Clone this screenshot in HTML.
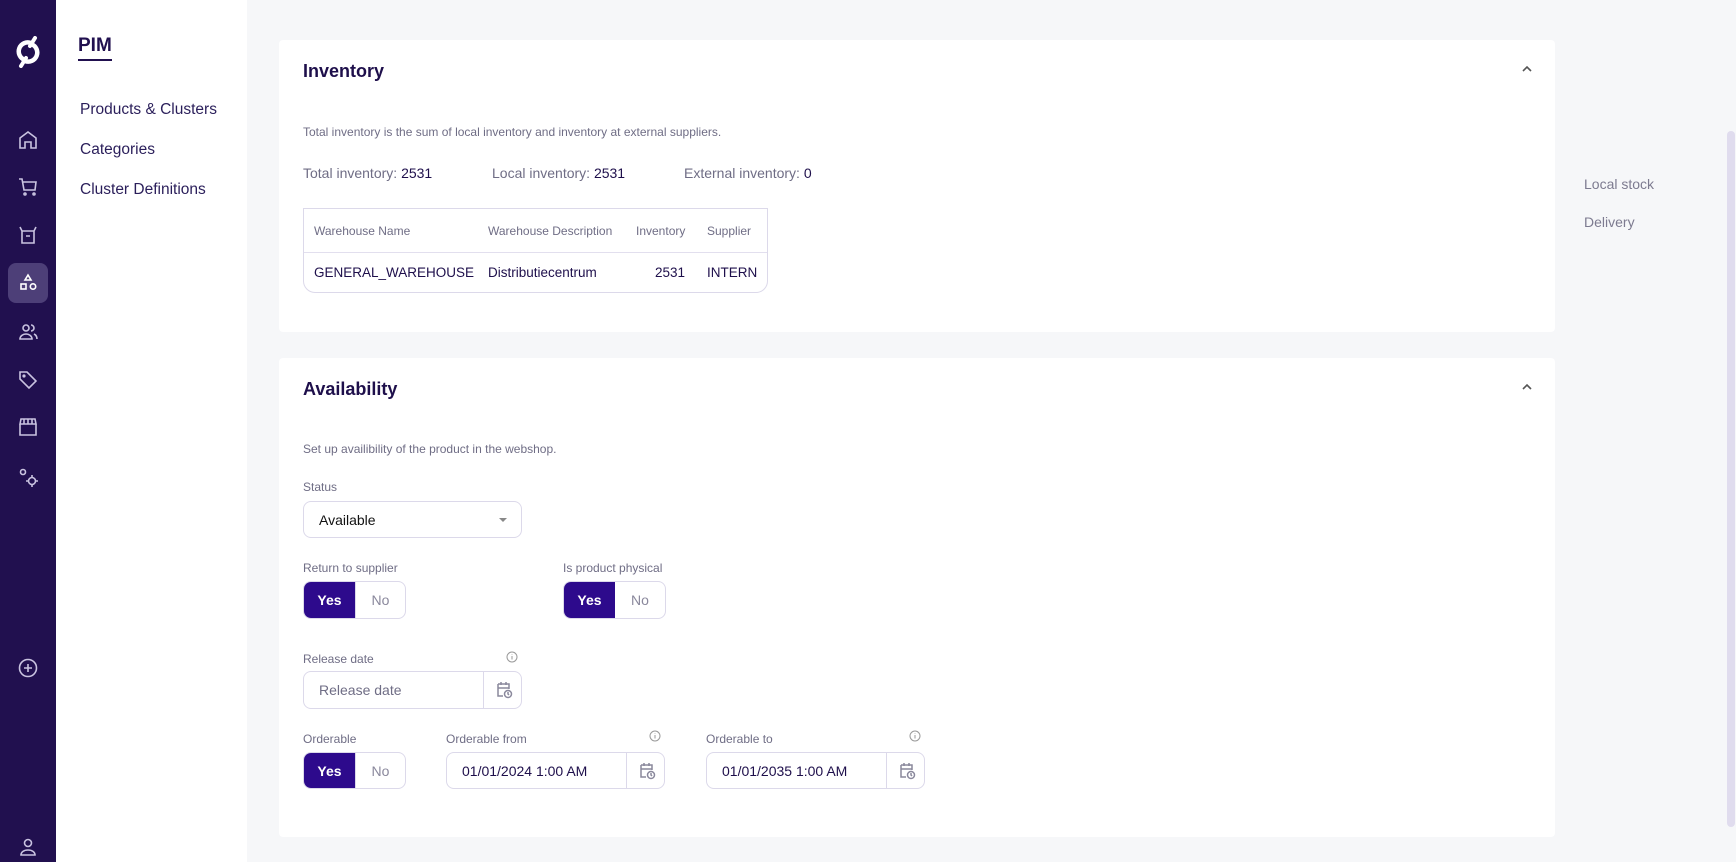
<!DOCTYPE html>
<html><head><meta charset="utf-8"><style>
*{box-sizing:border-box;margin:0;padding:0}
body{width:1736px;height:862px;overflow:hidden;background:#f6f7f9;font-family:"Liberation Sans",sans-serif;color:#1e0f4b;position:relative}
.abs{position:absolute}
.side{left:0;top:0;width:56px;height:862px;background:#21104f}
.ic{position:absolute;left:16px;width:24px;height:24px}
.nav{left:56px;top:0;width:191px;height:862px;background:#fff}
.card{position:absolute;left:279px;width:1276px;background:#fff;border-radius:4px}
.t{position:absolute;white-space:nowrap}
.lbl{font-size:12px;color:#6f6d85}
.box{position:absolute;border:1px solid #dcd9ea;border-radius:8px;background:#fff}
.tog{position:absolute;height:38px;width:103px;border:1px solid #dcd9ea;border-radius:8px;overflow:hidden;display:flex;font-size:14px}
.tog .y{width:51px;background:#2d0a8c;color:#fff;font-weight:bold;display:flex;align-items:center;justify-content:center}
.tog .n{flex:1;color:#8a889c;display:flex;align-items:center;justify-content:center}
</style></head><body>
<div class="abs side">
<svg class="abs" style="left:13px;top:36px" width="30" height="32" viewBox="0 0 30 32"><path d="M18.5 8.2 A9 9 0 0 1 12 25" fill="none" stroke="#fff" stroke-width="4.5"/><path d="M11.5 23.8 A9 9 0 0 1 18 7" fill="none" stroke="#fff" stroke-width="4.5"/><path d="M22 2 L17 10 M8 30 L13 22" stroke="#fff" stroke-width="4" stroke-linecap="round"/></svg>
<svg class="ic" style="top:128px" viewBox="0 0 24 24" fill="none" stroke="#c9c3e0" stroke-width="1.6"><path d="M4 10l8-6 8 6v10h-5v-6H9v6H4z"/></svg>
<svg class="ic" style="top:175px" viewBox="0 0 24 24" fill="none" stroke="#c9c3e0" stroke-width="1.6"><path d="M3 4h3l2 11h11l1-8H7"/><circle cx="9" cy="19" r="1"/><circle cx="18" cy="19" r="1"/></svg>
<svg class="ic" style="top:223px" viewBox="0 0 24 24" fill="none" stroke="#c9c3e0" stroke-width="1.6"><path d="M4 4l2 4h12l2-4M6 8v12h12V8M10 13h4"/></svg>
<div class="abs" style="left:8px;top:263px;width:40px;height:40px;border-radius:8px;background:#4d3f78"></div>
<svg class="ic" style="top:271px" viewBox="0 0 24 24" fill="none" stroke="#fff" stroke-width="1.6"><path d="M12 4l3 5H9z"/><rect x="5" y="13" width="5" height="5"/><circle cx="17" cy="15.5" r="2.7"/></svg>
<svg class="ic" style="top:320px" viewBox="0 0 24 24" fill="none" stroke="#c9c3e0" stroke-width="1.6"><circle cx="10" cy="8" r="3"/><path d="M4 19c0-3 3-5 6-5s6 2 6 5zM15 5a3 3 0 0 1 0 6M18 14c2 1 3 3 3 5"/></svg>
<svg class="ic" style="top:368px" viewBox="0 0 24 24" fill="none" stroke="#c9c3e0" stroke-width="1.6"><path d="M4 4h7l9 9-7 7-9-9z"/><circle cx="8" cy="8" r="0.8"/></svg>
<svg class="ic" style="top:415px" viewBox="0 0 24 24" fill="none" stroke="#c9c3e0" stroke-width="1.6"><path d="M4 9l1-5h14l1 5zM4 9v11h16V9M8 4v5M12 4v5M16 4v5"/></svg>
<svg class="ic" style="top:465px" viewBox="0 0 24 24" fill="none" stroke="#c9c3e0" stroke-width="1.6"><circle cx="7" cy="7" r="2.5"/><circle cx="16" cy="16" r="3.5"/><path d="M16 10v2M16 20v2M10 16h2M20 16h2"/></svg>
<svg class="ic" style="top:656px" viewBox="0 0 24 24" fill="none" stroke="#c9c3e0" stroke-width="1.6"><circle cx="12" cy="12" r="8.5"/><path d="M12 8v8M8 12h8"/></svg>
<svg class="ic" style="top:835px" viewBox="0 0 24 24" fill="none" stroke="#c9c3e0" stroke-width="1.6"><circle cx="12" cy="8" r="3.5"/><path d="M5 20c0-3 3-5 7-5s7 2 7 5z"/></svg>
</div>
<div class="abs nav">
<div class="t" style="left:22px;top:35px;font-size:19px;font-weight:bold;color:#21104f">PIM</div>
<div class="abs" style="left:22px;top:59px;width:34px;height:2px;background:#21104f"></div>
<div class="t" style="left:24px;top:101px;font-size:15.5px;color:#2a1e5a">Products &amp; Clusters</div>
<div class="t" style="left:24px;top:141px;font-size:15.5px;color:#2a1e5a">Categories</div>
<div class="t" style="left:24px;top:181px;font-size:15.5px;color:#2a1e5a">Cluster Definitions</div>
</div>

<div class="card" style="top:40px;height:292px">
<div class="t" style="left:24px;top:21px;font-size:18px;font-weight:bold">Inventory</div>
<svg class="abs" style="left:1241px;top:22px" width="14" height="14" viewBox="0 0 14 14"><path d="M3 9l4-4 4 4" fill="none" stroke="#555" stroke-width="1.6"/></svg>
<div class="t lbl" style="left:24px;top:85px">Total inventory is the sum of local inventory and inventory at external suppliers.</div>
<div class="t" style="left:24px;top:125px;font-size:14px;color:#6f6d85">Total inventory: <span style="color:#1e0f4b">2531</span></div>
<div class="t" style="left:213px;top:125px;font-size:14px;color:#6f6d85">Local inventory: <span style="color:#1e0f4b">2531</span></div>
<div class="t" style="left:405px;top:125px;font-size:14px;color:#6f6d85">External inventory: <span style="color:#1e0f4b">0</span></div>
<div class="box" style="left:24px;top:168px;width:465px;height:85px;border-radius:0 0 12px 12px">
<div class="abs" style="left:0;top:43px;width:100%;height:1px;background:#e2dfee"></div>
<div class="t lbl" style="left:10px;top:15px">Warehouse Name</div>
<div class="t lbl" style="left:184px;top:15px">Warehouse Description</div>
<div class="t lbl" style="left:332px;top:15px">Inventory</div>
<div class="t lbl" style="left:403px;top:15px">Supplier</div>
<div class="t" style="left:10px;top:56px;font-size:13.5px">GENERAL_WAREHOUSE</div>
<div class="t" style="left:184px;top:56px;font-size:13.5px">Distributiecentrum</div>
<div class="t" style="left:351px;top:56px;font-size:13.5px">2531</div>
<div class="t" style="left:403px;top:56px;font-size:13.5px">INTERN</div>
</div>
</div>

<div class="card" style="top:358px;height:479px">
<div class="t" style="left:24px;top:21px;font-size:18px;font-weight:bold">Availability</div>
<svg class="abs" style="left:1241px;top:22px" width="14" height="14" viewBox="0 0 14 14"><path d="M3 9l4-4 4 4" fill="none" stroke="#555" stroke-width="1.6"/></svg>
<div class="t lbl" style="left:24px;top:84px">Set up availibility of the product in the webshop.</div>
<div class="t lbl" style="left:24px;top:122px">Status</div>
<div class="box" style="left:24px;top:143px;width:219px;height:37px"><div class="t" style="left:15px;top:10px;font-size:14px;color:#111">Available</div><div class="abs" style="left:195px;top:16px;border:4px solid transparent;border-top:4px solid #888;border-bottom:0"></div></div>
<div class="t lbl" style="left:24px;top:203px">Return to supplier</div>
<div class="tog" style="left:24px;top:223px"><div class="y">Yes</div><div class="n" style="border-left:1px solid #dcd9ea">No</div></div>
<div class="t lbl" style="left:284px;top:203px">Is product physical</div>
<div class="tog" style="left:284px;top:223px"><div class="y">Yes</div><div class="n">No</div></div>
<div class="t lbl" style="left:24px;top:294px">Release date</div>
<svg class="abs" style="left:227px;top:293px" width="12" height="12" viewBox="0 0 12 12"><circle cx="6" cy="6" r="5" fill="none" stroke="#999" /><path d="M6 5v3.5M6 3.3v.5" stroke="#999"/></svg>
<div class="box" style="left:24px;top:313px;width:219px;height:38px"><div class="t" style="left:15px;top:10px;font-size:14px;color:#6f6d85">Release date</div><div class="abs" style="left:179px;top:0;width:1px;height:36px;background:#dcd9ea"></div>
<svg class="abs" style="left:190px;top:8px" width="20" height="20" viewBox="0 0 20 20" fill="none" stroke="#8a889c" stroke-width="1.5"><path d="M4 4h11v5M4 4v12h5M4 8h11M7 2v3M12 2v3"/><circle cx="14" cy="14" r="3.5"/><path d="M14 12v2l1 1"/></svg></div>
<div class="t lbl" style="left:24px;top:374px">Orderable</div>
<div class="tog" style="left:24px;top:394px;height:37px"><div class="y">Yes</div><div class="n" style="border-left:1px solid #dcd9ea">No</div></div>
<div class="t lbl" style="left:167px;top:374px">Orderable from</div>
<svg class="abs" style="left:370px;top:372px" width="12" height="12" viewBox="0 0 12 12"><circle cx="6" cy="6" r="5" fill="none" stroke="#999" /><path d="M6 5v3.5M6 3.3v.5" stroke="#999"/></svg>
<div class="box" style="left:167px;top:394px;width:219px;height:37px"><div class="t" style="left:15px;top:10px;font-size:14px">01/01/2024 1:00 AM</div><div class="abs" style="left:179px;top:0;width:1px;height:35px;background:#dcd9ea"></div>
<svg class="abs" style="left:190px;top:8px" width="20" height="20" viewBox="0 0 20 20" fill="none" stroke="#8a889c" stroke-width="1.5"><path d="M4 4h11v5M4 4v12h5M4 8h11M7 2v3M12 2v3"/><circle cx="14" cy="14" r="3.5"/><path d="M14 12v2l1 1"/></svg></div>
<div class="t lbl" style="left:427px;top:374px">Orderable to</div>
<svg class="abs" style="left:630px;top:372px" width="12" height="12" viewBox="0 0 12 12"><circle cx="6" cy="6" r="5" fill="none" stroke="#999" /><path d="M6 5v3.5M6 3.3v.5" stroke="#999"/></svg>
<div class="box" style="left:427px;top:394px;width:219px;height:37px"><div class="t" style="left:15px;top:10px;font-size:14px">01/01/2035 1:00 AM</div><div class="abs" style="left:179px;top:0;width:1px;height:35px;background:#dcd9ea"></div>
<svg class="abs" style="left:190px;top:8px" width="20" height="20" viewBox="0 0 20 20" fill="none" stroke="#8a889c" stroke-width="1.5"><path d="M4 4h11v5M4 4v12h5M4 8h11M7 2v3M12 2v3"/><circle cx="14" cy="14" r="3.5"/><path d="M14 12v2l1 1"/></svg></div>
</div>

<div class="t" style="left:1584px;top:176px;font-size:14px;color:#7d7b90">Local stock</div>
<div class="t" style="left:1584px;top:214px;font-size:14px;color:#7d7b90">Delivery</div>
<div class="abs" style="left:1727px;top:131px;width:8px;height:696px;border-radius:4px;background:#e0dcee"></div>
</body></html>
